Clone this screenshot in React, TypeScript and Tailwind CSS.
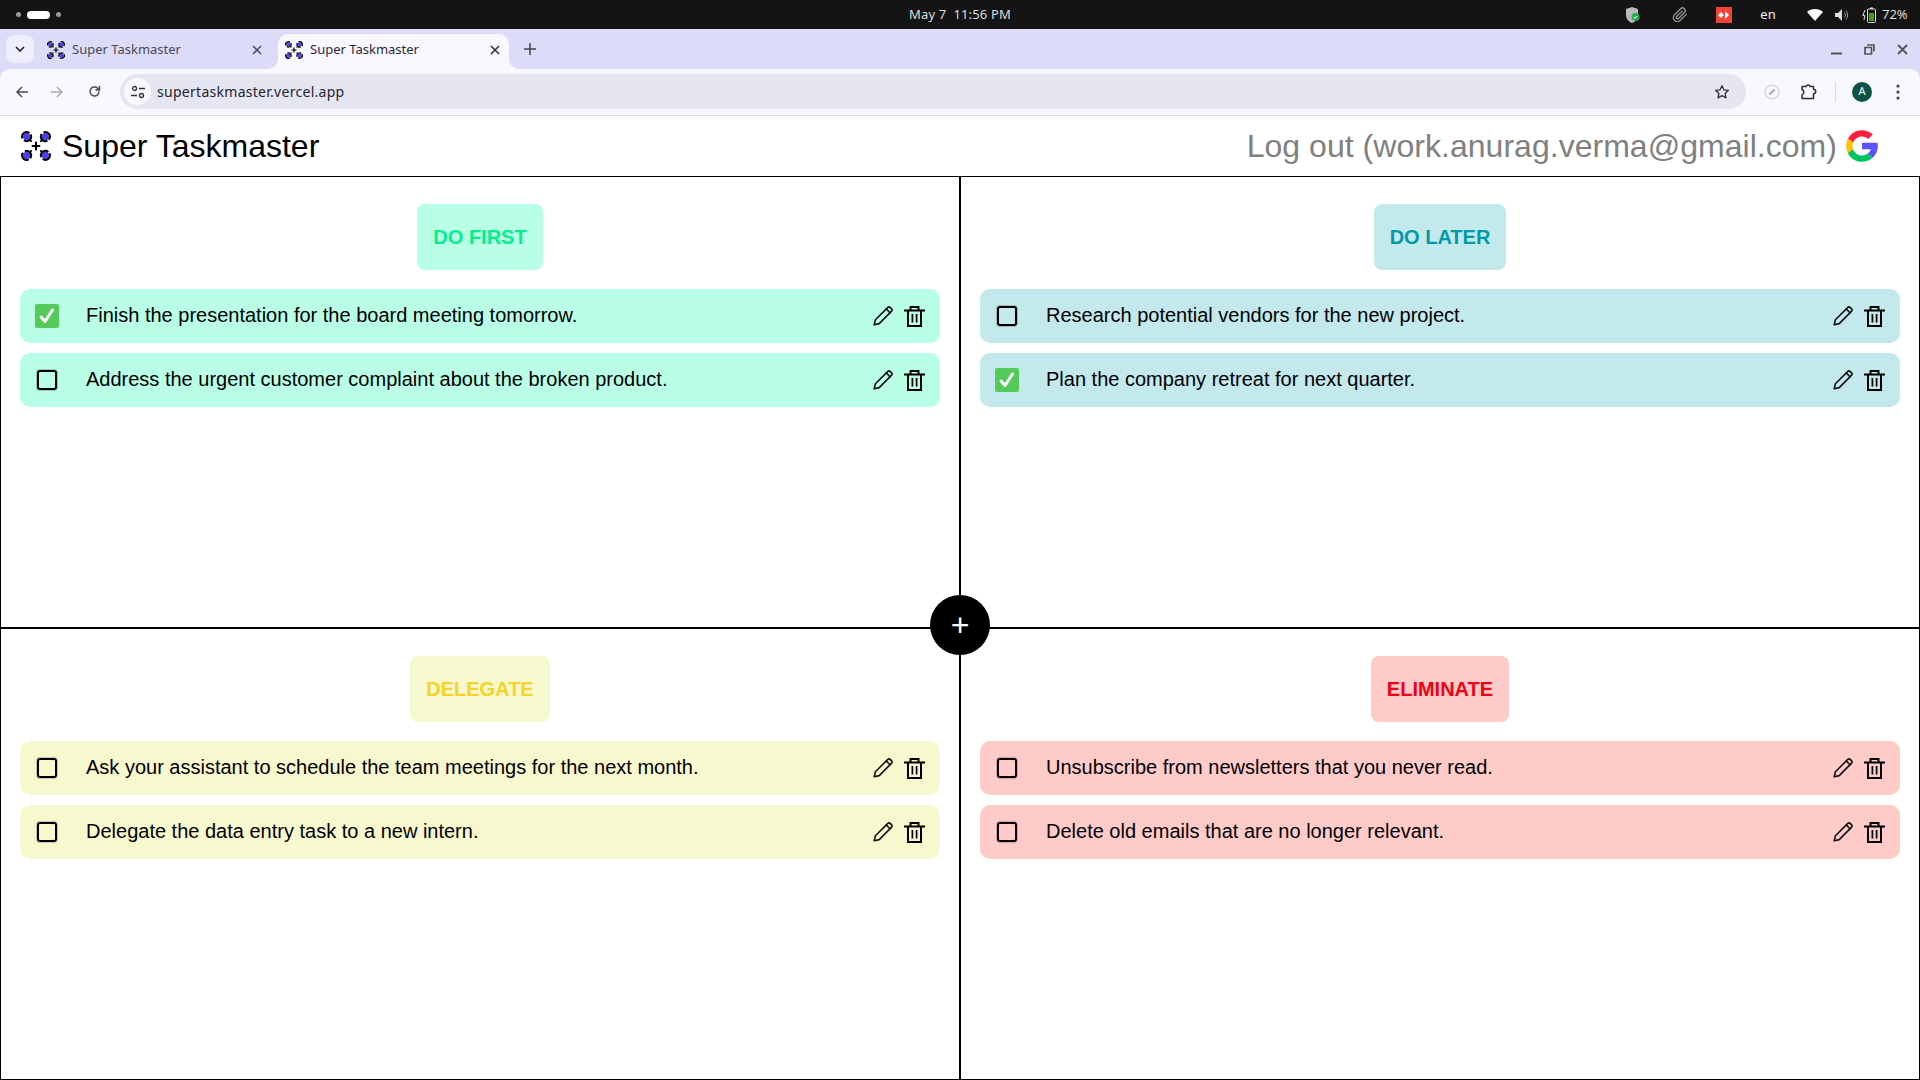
import React from "react";

const ui = "font-['Noto_Sans','Open_Sans',sans-serif]";

function Logo({ size }: { size: number }) {
  const corners = [
    { x: 6, y: 6, rot: -28, tx: 4, ty: 4 },
    { x: 26, y: 6, rot: 62, tx: -4, ty: 4 },
    { x: 6, y: 26, rot: 62, tx: 4, ty: -4 },
    { x: 26, y: 26, rot: -28, tx: -4, ty: -4 },
  ];
  return (
    <svg width={size} height={size} viewBox="0 0 32 32" className="shrink-0">
      {corners.map((c) => (
        <g key={`${c.x}-${c.y}`}>
          <circle cx={c.x} cy={c.y} r="3.8" fill="#4a3ff0" />
          <circle
            cx={c.x}
            cy={c.y}
            r="4.8"
            fill="none"
            stroke="#000"
            strokeWidth="2.2"
            strokeDasharray="12.5 2.58"
            transform={`rotate(${c.rot} ${c.x} ${c.y})`}
          />
          <path d={`M${c.x + c.tx} ${c.y + c.ty}L${c.x + c.tx * 1.2} ${c.y + c.ty * 1.2}`} stroke="#000" strokeWidth="2" strokeLinecap="round" />
        </g>
      ))}
      <path d="M16 11.5v9M11.5 16h9" stroke="#000" strokeWidth="2.2" />
    </svg>
  );
}

function GoogleG() {
  return (
    <svg width="38" height="38" viewBox="0 0 48 48" className="shrink-0">
      <path fill="#ff1f3d" d="M6.3 14.7l6.6 4.8C14.7 15.1 19 12 24 12c3.1 0 5.8 1.2 8 3l5.7-5.7C34 6.1 29.3 4 24 4 16.3 4 9.7 8.3 6.3 14.7z" />
      <path fill="#ffc107" d="M6.3 14.7C4.8 17.5 4 20.6 4 24s.9 6.6 2.4 9.4l6.6-5.1C12.4 26.7 12 25.4 12 24c0-1.6.3-3.1.9-4.5z" />
      <path fill="#00c563" d="M24 44c5.2 0 9.9-2 13.4-5.2l-6.2-5.2C29.2 35.1 26.7 36 24 36c-5.2 0-9.6-3.3-11.3-7.9L6.2 33C9.5 39.6 16.2 44 24 44z" />
      <path fill="#5c55f5" d="M43.6 20H24v8h11.3c-.8 2.2-2.2 4.2-4.1 5.6l6.2 5.2C41.8 34.8 44 29.8 44 24c0-1.3-.1-2.7-.4-4z" />
    </svg>
  );
}

function Pencil() {
  return (
    <svg width="20" height="20" viewBox="0 0 20 20" fill="none" stroke="#111" strokeWidth="1.6" strokeLinejoin="round" strokeLinecap="round" className="shrink-0">
      <path d="M1.2 18.8l1.2-5L14.6 1.6a2 2 0 0 1 2.8 0l1 1a2 2 0 0 1 0 2.8L6.2 17.6z" />
      <path d="M13.2 3l3.8 3.8" />
    </svg>
  );
}

function Trash() {
  return (
    <svg width="21" height="21" viewBox="0 0 21 21" fill="none" stroke="#000" strokeWidth="2" className="shrink-0">
      <path d="M0 4.5h21M6.5 4.5V1h8v3.5M4 4.5V20h13V4.5" />
      <path d="M8.4 8v8.5M12.6 8v8.5" strokeWidth="1.7" />
    </svg>
  );
}

function Check({ done }: { done: boolean }) {
  if (done) {
    return (
      <div className="flex h-6 w-6 shrink-0 items-center justify-center rounded-[2px] bg-[#55c95a]">
        <svg width="18" height="18" viewBox="0 0 18 18" fill="none" stroke="#fff" strokeWidth="3" strokeLinecap="round" strokeLinejoin="round">
          <path d="M3 10l4 4.5L14.5 3" />
        </svg>
      </div>
    );
  }
  return (
    <div className="flex h-6 w-6 shrink-0 items-center justify-center">
      <div className="h-[20px] w-[20px] rounded-[3px] border-2 border-black shadow-[0_0_0_1px_rgba(0,0,0,0.2)]" />
    </div>
  );
}

type Task = { text: string; done?: boolean };

function Quadrant({ title, chip, label, tasks }: { title: string; chip: string; label: string; tasks: Task[] }) {
  return (
    <section className="flex flex-col border border-black px-[19px] pt-[27px]">
      <div className="mb-[19px] flex justify-center">
        <div className={`flex h-[66px] items-center rounded-lg px-4 text-[20px] font-bold ${chip} ${label}`}>{title}</div>
      </div>
      <div className="flex flex-col gap-[10px]">
        {tasks.map((t) => (
          <div key={t.text} className={`flex h-[54px] items-center rounded-[10px] pl-[15px] pr-[15px] ${chip}`}>
            <Check done={!!t.done} />
            <span className="ml-[27px] flex-1 pb-[2px] text-[20px] leading-6 text-black">{t.text}</span>
            <div className="flex items-center gap-[11px]">
              <Pencil />
              <Trash />
            </div>
          </div>
        ))}
      </div>
    </section>
  );
}

function BrowserTab({ active }: { active?: boolean }) {
  return (
    <div className={`relative flex h-[35px] w-[231px] items-center rounded-t-[10px] pb-[4px] pl-[7px] pr-[9px] ${active ? "bg-[#f9f7ff] text-[#2a2a35]" : "text-[#4a4a58]"}`}>
      <Logo size={18} />
      <span className="ml-[7px] flex-1 text-[13px]">Super Taskmaster</span>
      <svg width="10" height="10" viewBox="0 0 10 10" stroke="currentColor" strokeWidth="1.5"><path d="M1 1l8 8M9 1L1 9" /></svg>
      {active && (
        <>
          <svg className="absolute bottom-0 left-[-10px]" width="10" height="10" viewBox="0 0 10 10" fill="#f9f7ff"><path d="M10 0v10H0a10 10 0 0 0 10-10z" /></svg>
          <svg className="absolute bottom-0 right-[-10px]" width="10" height="10" viewBox="0 0 10 10" fill="#f9f7ff"><path d="M0 0v10h10A10 10 0 0 1 0 0z" /></svg>
        </>
      )}
    </div>
  );
}

export default function App() {
  return (
    <div className="flex h-[1080px] w-[1920px] flex-col overflow-hidden bg-white font-['Liberation_Sans',sans-serif]">
      {/* system bar */}
      <div className={`grid h-[29px] shrink-0 grid-cols-[1fr_auto_1fr] items-center bg-[#141414] ${ui}`}>
        <div className="ml-[16px] flex items-center gap-[6px]">
          <div className="h-[5px] w-[5px] rounded-full bg-[#999]" />
          <div className="h-[8px] w-[23px] rounded-full bg-white" />
          <div className="h-[5px] w-[5px] rounded-full bg-[#999]" />
        </div>
        <div className="text-center text-[13px] tracking-[0.15px] text-[#ddd]">May 7&nbsp; 11:56 PM</div>
        <div className="flex items-center justify-end pr-[12px]">
          <svg width="16" height="18" viewBox="0 0 16 18">
            <path d="M7 1l6 2v6c0 4-3 7-6 8-3-1-6-4-6-8V3z" fill="#bbb" />
            <circle cx="10.5" cy="11" r="4" fill="#27ae4f" />
            <path d="M8.7 11l1.3 1.3 2-2.3" stroke="#fff" strokeWidth="1" fill="none" />
          </svg>
          <svg className="ml-[31px]" width="16" height="16" viewBox="0 0 24 24" fill="none" stroke="#999" strokeWidth="2" strokeLinecap="round" strokeLinejoin="round">
            <path d="M21.4 11.1l-9.2 9.2a6 6 0 0 1-8.5-8.5l9.2-9.2a4 4 0 0 1 5.7 5.7l-9.2 9.2a2 2 0 0 1-2.8-2.8l8.5-8.5" />
          </svg>
          <div className="ml-[28px] flex h-4 w-4 items-center justify-center bg-[#f44336]">
            <svg width="12" height="8" viewBox="0 0 12 8" fill="#fff"><path d="M0 4l3-3 3 3-3 3zM7 0l4 4-4 4z" /></svg>
          </div>
          <span className="ml-[28px] w-[16px] text-center text-[13px] text-[#eee]">en</span>
          <svg className="ml-[31px]" width="16" height="13" viewBox="0 0 16 13" fill="#fff"><path d="M0 4C4 0 12 0 16 4l-8 9z" /></svg>
          <svg className="ml-[12px]" width="14" height="14" viewBox="0 0 14 14" fill="none">
            <path d="M0 5h3l4-4v12l-4-4H0z" fill="#ddd" />
            <path d="M9.5 4.5a4 4 0 0 1 0 5M11 2.5a7 7 0 0 1 0 9" stroke="#999" strokeWidth="1" />
          </svg>
          <svg className="ml-[13px]" width="14" height="16" viewBox="0 0 14 16" fill="none">
            <path d="M3 3L0.8 8.5h2L2 13" stroke="#ddd" strokeWidth="1" />
            <rect x="5.5" y="2" width="8" height="13.5" rx="1" stroke="#ddd" />
            <rect x="7" y="6" width="5" height="8" fill="#4f9a0f" />
            <rect x="8" y="0.5" width="3" height="1.5" fill="#ddd" />
          </svg>
          <span className="ml-[6px] w-[26px] text-[13px] text-[#ddd]">72%</span>
        </div>
      </div>

      <div className={`shrink-0 bg-[#dcdcf8] ${ui}`}>
        {/* tab strip */}
        <div className="flex h-[40px] items-end">
          <div className="mb-[6px] ml-[6px] flex h-[28px] w-[28px] items-center justify-center rounded-lg bg-[#efeefc]">
            <svg width="10" height="6" viewBox="0 0 10 6" fill="none" stroke="#222" strokeWidth="1.6"><path d="M1 1l4 4 4-4" /></svg>
          </div>
          <div className="ml-[6px] flex gap-[7px]">
            <BrowserTab />
            <BrowserTab active />
          </div>
          <svg className="mb-[14px] ml-[15px]" width="12" height="12" viewBox="0 0 12 12" stroke="#444" strokeWidth="1.5"><path d="M6 0v12M0 6h12" /></svg>
          <div className="flex-1" />
          <div className="mb-[14px] mr-[12px] flex items-center gap-[22px]">
            <svg width="11" height="11" viewBox="0 0 11 11" stroke="#555" strokeWidth="2"><path d="M0 9.5h11" /></svg>
            <svg width="11" height="11" viewBox="0 0 11 11" fill="none" stroke="#555" strokeWidth="1.7"><path d="M3 1h7v6.5M1 3.5h6.5V10H1z" /></svg>
            <svg width="11" height="11" viewBox="0 0 11 11" stroke="#555" strokeWidth="1.8"><path d="M1 1l9 9M10 1l-9 9" /></svg>
          </div>
        </div>

        {/* toolbar */}
        <div className="flex h-[47px] items-center rounded-t-[10px] border-b border-[#dedae8] bg-[#f9f7ff] pb-[1px]">
          <svg className="ml-[16px]" width="12" height="12" viewBox="0 0 12 12" fill="none" stroke="#4a4a58" strokeWidth="1.5"><path d="M12 6H1M6 1L1 6l5 5" /></svg>
          <svg className="ml-[23px]" width="12" height="12" viewBox="0 0 12 12" fill="none" stroke="#aaa" strokeWidth="1.5"><path d="M0 6h11M6 1l5 5-5 5" /></svg>
          <svg className="ml-[25px]" width="13" height="13" viewBox="0 0 13 13" fill="none" stroke="#4a4a58" strokeWidth="1.5"><path d="M11 6.5A4.5 4.5 0 1 1 9.6 3.2L11.5 5M11.5 1v4h-4" /></svg>
          <div className="ml-[19px] flex h-[35px] w-[1626px] items-center rounded-full bg-[#e6e6f2] pl-[4px] pr-[16px]">
            <div className="flex h-[27px] w-[27px] items-center justify-center rounded-full bg-[#f9f7ff]">
              <svg width="14" height="14" viewBox="0 0 14 14" fill="none" stroke="#333" strokeWidth="1.3">
                <circle cx="3.5" cy="3.5" r="2" />
                <circle cx="10.5" cy="10.5" r="2" />
                <path d="M8 3.5h6M0 10.5h6" />
              </svg>
            </div>
            <span className="ml-[6px] flex-1 text-[14px] tracking-[0.28px] text-[#24242e]">supertaskmaster.vercel.app</span>
            <svg width="16" height="16" viewBox="0 0 24 24" fill="none" stroke="#333" strokeWidth="2" strokeLinejoin="round">
              <path d="M12 2.5l2.9 6.2 6.8.8-5 4.6 1.3 6.7-6-3.3-6 3.3 1.3-6.7-5-4.6 6.8-.8z" />
            </svg>
          </div>
          <svg className="ml-[18px]" width="16" height="16" viewBox="0 0 16 16" fill="none">
            <circle cx="8" cy="8" r="7" stroke="#ccc" strokeWidth="1.2" />
            <path d="M5.5 10.5L10.5 5.5" stroke="#aaa" strokeWidth="2" />
          </svg>
          <svg className="ml-[20px]" width="18" height="17" viewBox="0 0 18 17" fill="none" stroke="#2a2a3a" strokeWidth="1.5" strokeLinejoin="round">
            <path d="M2 3.5h4a2.2 2.2 0 0 1 4.2 0H13.5V6.3a2.2 2.2 0 0 1 0 4.4V15.5H2V12a3 3 0 0 0 0-5.5z" />
          </svg>
          <div className="ml-[17px] h-[20px] w-[1px] bg-[#d5d7f0]" />
          <div className="ml-[16px] flex h-[20px] w-[20px] items-center justify-center rounded-full bg-[#0b5345] text-[11px] text-white">A</div>
          <svg className="ml-[24px]" width="4" height="16" viewBox="0 0 4 16" fill="#444"><circle cx="2" cy="2" r="1.6" /><circle cx="2" cy="8" r="1.6" /><circle cx="2" cy="14" r="1.6" /></svg>
        </div>
      </div>

      {/* page header */}
      <header className="flex h-[60px] shrink-0 items-center justify-between pl-[21px] pr-[39px]">
        <div className="flex items-center gap-[11px]">
          <Logo size={30} />
          <span className="text-[32px] text-black">Super Taskmaster</span>
        </div>
        <div className="flex items-center gap-[6px]">
          <span className="text-[32px] tracking-[0.03px] text-[#808080]">Log out (work.anurag.verma@gmail.com)</span>
          <GoogleG />
        </div>
      </header>

      {/* matrix */}
      <main className="relative grid min-h-0 flex-1 grid-cols-2 grid-rows-2">
        <Quadrant
          title="DO FIRST"
          chip="bg-[#b9ffe6]"
          label="text-[#00f08f]"
          tasks={[
            { text: "Finish the presentation for the board meeting tomorrow.", done: true },
            { text: "Address the urgent customer complaint about the broken product." },
          ]}
        />
        <Quadrant
          title="DO LATER"
          chip="bg-[#c3e9ec]"
          label="text-[#009aa6]"
          tasks={[
            { text: "Research potential vendors for the new project." },
            { text: "Plan the company retreat for next quarter.", done: true },
          ]}
        />
        <Quadrant
          title="DELEGATE"
          chip="bg-[#f8f8ce]"
          label="text-[#f5d327]"
          tasks={[
            { text: "Ask your assistant to schedule the team meetings for the next month." },
            { text: "Delegate the data entry task to a new intern." },
          ]}
        />
        <Quadrant
          title="ELIMINATE"
          chip="bg-[#ffcbc9]"
          label="text-[#f00014]"
          tasks={[
            { text: "Unsubscribe from newsletters that you never read." },
            { text: "Delete old emails that are no longer relevant." },
          ]}
        />
        <button className="absolute left-[930px] top-[419px] flex h-[60px] w-[60px] items-center justify-center rounded-full bg-black pb-[1px] text-[32px] leading-none text-white">+</button>
      </main>
    </div>
  );
}
